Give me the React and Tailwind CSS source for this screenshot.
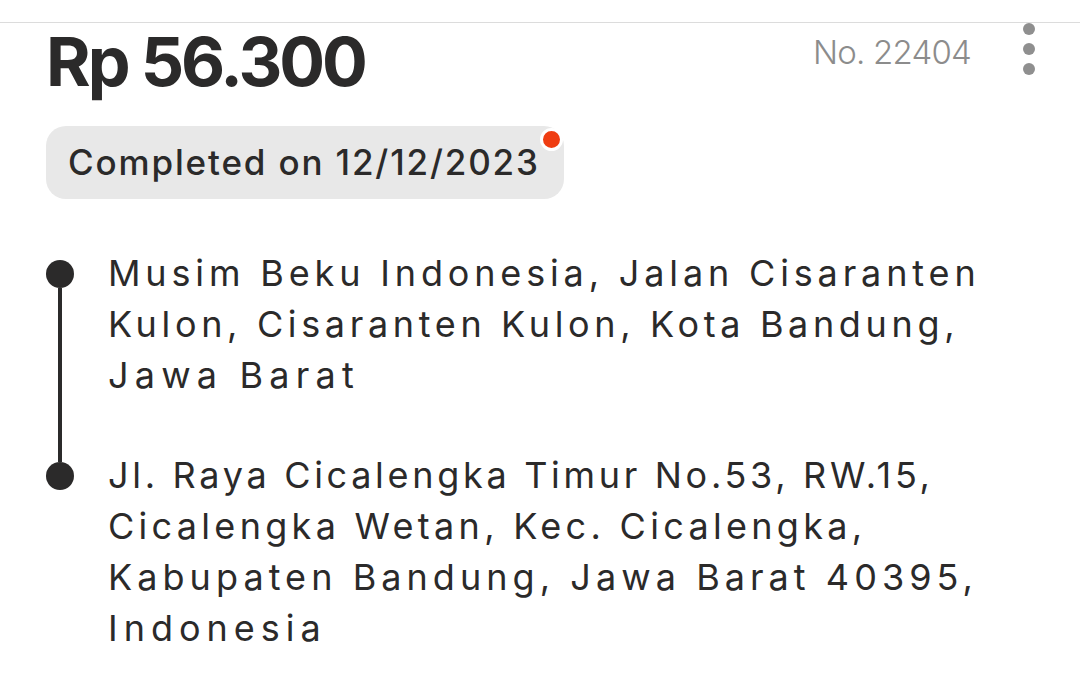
import React from "react";

// each address line with its own tracking so the wrap widths match
const addresses = [
  [
    ["Musim Beku Indonesia, Jalan Cisaranten", "tracking-[4.85px]"],
    ["Kulon, Cisaranten Kulon, Kota Bandung,", "tracking-[4.65px]"],
    ["Jawa Barat", "tracking-[6.2px]"],
  ],
  [
    ["Jl. Raya Cicalengka Timur No.53, RW.15,", "tracking-[3.7px]"],
    ["Cicalengka Wetan, Kec. Cicalengka,", "tracking-[4.3px]"],
    ["Kabupaten Bandung, Jawa Barat 40395,", "tracking-[5.05px]"],
    ["Indonesia", "tracking-[6px]"],
  ],
];

const App = () => {
  return (
    <div className="w-[1080px] h-[697px] bg-white overflow-hidden font-['Inter',sans-serif] text-[#2b2a2a]">
      {/* top divider */}
      <div className="mt-[22px] border-t border-[#dcdcdc]" />

      <div className="pl-[46px] pr-[45px]">
        {/* HEADER */}
        <div className="flex items-start justify-between">
          <h1 className="text-[68px] leading-[80px] font-bold tracking-[-3px] -mt-[2px]">
            Rp 56.300
          </h1>
          <div className="flex items-start gap-[52px]">
            <span className="text-[33px] leading-[40px] font-light text-[#8c8c8c] tracking-[-0.8px] mt-[9px]">
              No. 22404
            </span>
            <div className="flex flex-col gap-[8px] w-[12px]">
              <span className="w-[12px] h-[12px] rounded-full bg-[#8f8f8f]" />
              <span className="w-[12px] h-[12px] rounded-full bg-[#8f8f8f]" />
              <span className="w-[12px] h-[12px] rounded-full bg-[#8f8f8f]" />
            </div>
          </div>
        </div>

        {/* STATUS */}
        <div className="mt-[25px] relative inline-flex items-center h-[73px] pl-[22px] pr-[24px] rounded-[20px] bg-[#e8e8e8]">
          <span className="text-[35px] font-medium tracking-[1.85px] text-[#2b2a2a]">
            Completed on 12/12/2023
          </span>
          <span className="absolute top-[2px] right-[1px] w-[23px] h-[23px] rounded-full bg-[#ef3d12] border-[3px] border-white" />
        </div>

        {/* ROUTE */}
        <div className="mt-[49px] flex flex-col">
          {addresses.map((lines, index) => (
            <div key={index} className="flex">
              <div className="w-[62px] shrink-0 flex flex-col items-start">
                {index > 0 && <span className="ml-[12px] w-[4px] h-[12px] bg-[#2b2a2a]" />}
                <span
                  className={`w-[28px] h-[28px] rounded-full bg-[#2b2a2a] shrink-0 ${
                    index === 0 ? "mt-[12px]" : ""
                  }`}
                />
                {index < addresses.length - 1 && (
                  <span className="ml-[12px] w-[4px] flex-1 bg-[#2b2a2a]" />
                )}
              </div>
              <div
                className={`text-[36px] leading-[51px] font-normal whitespace-nowrap ${
                  index < addresses.length - 1 ? "pb-[49px]" : ""
                }`}
              >
                {lines.map(([line, track], i) => (
                  <p key={i} className={track}>
                    {line}
                  </p>
                ))}
              </div>
            </div>
          ))}
        </div>
      </div>
    </div>
  );
};

export default App;
